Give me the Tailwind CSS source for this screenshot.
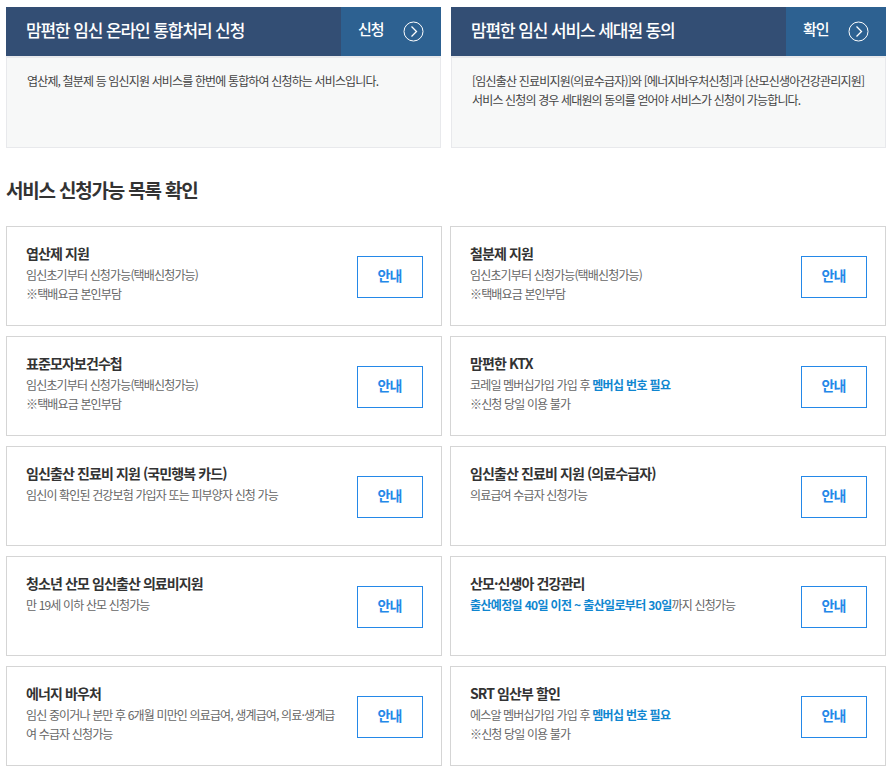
<!DOCTYPE html>
<html lang="ko">
<head>
  <meta charset="UTF-8">
  <title>서비스 신청</title>
  <script src="https://cdn.jsdelivr.net/npm/@tailwindcss/browser@4"></script>
</head>
<body class="bg-white font-['Noto_Sans_CJK_KR',sans-serif] tracking-[-0.85px] text-[#666] overflow-hidden">
  <div class="w-[896px] h-[775px] pt-[7px] pl-[6px] pr-[10px]">
    <!-- Top panels -->
    <div class="flex gap-[10px]">
      <div class="w-[435px]">
        <div class="flex h-[49px] bg-[#334e74] text-white">
          <div class="flex-1 pl-[20px] text-[17px] font-medium leading-[45px] tracking-[-1.1px]">맘편한 임신 온라인 통합처리 신청</div>
          <div class="w-[100px] bg-[#2d6191] flex items-center pl-[17px] pr-[17px] justify-between">
            <span class="text-[15px] font-medium pb-[4px] tracking-[-1px]">신청</span>
            <svg class="w-[21px] h-[21px] mb-[1px]" viewBox="0 0 21 21" fill="none" stroke="white"><circle cx="10.5" cy="10.5" r="9.5"/><path d="M8.5 5.5l5 5-5 5" stroke-width="1.3"/></svg>
          </div>
        </div>
        <div class="h-[92px] bg-[#f7f8f8] border border-t-2 border-[#e8e9ec] pt-[13px] pl-[20px] text-[12px] leading-[19px] text-[#444]">
          엽산제, 철분제 등 임신지원 서비스를 한번에 통합하여 신청하는 서비스입니다.
        </div>
      </div>
      <div class="w-[435px]">
        <div class="flex h-[49px] bg-[#334e74] text-white">
          <div class="flex-1 pl-[20px] text-[17px] font-medium leading-[45px] tracking-[-1.1px]">맘편한 임신 서비스 세대원 동의</div>
          <div class="w-[100px] bg-[#2d6191] flex items-center pl-[17px] pr-[17px] justify-between">
            <span class="text-[15px] font-medium pb-[4px] tracking-[-1px]">확인</span>
            <svg class="w-[21px] h-[21px] mb-[1px]" viewBox="0 0 21 21" fill="none" stroke="white"><circle cx="10.5" cy="10.5" r="9.5"/><path d="M8.5 5.5l5 5-5 5" stroke-width="1.3"/></svg>
          </div>
        </div>
        <div class="h-[92px] bg-[#f7f8f8] border border-t-2 border-[#e8e9ec] pt-[13px] pl-[20px] text-[12px] leading-[19px] text-[#444]">
          <span class="tracking-[-0.8px]">[임신출산 진료비지원(의료수급자)]와 [에너지바우처신청]과 [산모신생아건강관리지원]</span><br>
          서비스 신청의 경우 세대원의 동의를 얻어야 서비스가 신청이 가능합니다.
        </div>
      </div>
    </div>

    <h2 class="mt-[27px] h-[30px] text-[19px] font-bold leading-[30px] tracking-[-1.2px] text-[#333]">서비스 신청가능 목록 확인</h2>

    <!-- Service list -->
    <div class="mt-[21px] grid grid-cols-[436px_436px] gap-x-[8px] gap-y-[10px]">
      <div class="h-[100px] border border-[#d5d5d5] flex items-center justify-between pl-[19px] pr-[18px]">
        <div class="h-[98px] pt-[16px] w-[312px]">
          <h3 class="text-[14px] font-bold leading-[21px] mb-[1px] tracking-[-0.9px] text-[#333]">엽산제 지원</h3>
          <p class="text-[12px] leading-[19px]">임신초기부터 신청가능(택배신청가능)<br>※택배요금 본인부담</p>
        </div>
        <a class="mt-[2px] w-[66px] h-[42px] pb-[4px] pr-[1px] border border-[#2488e8] text-[#2488e8] text-[14px] font-bold flex items-center justify-center">안내</a>
      </div>
      <div class="h-[100px] border border-[#d5d5d5] flex items-center justify-between pl-[19px] pr-[18px]">
        <div class="h-[98px] pt-[16px] w-[312px]">
          <h3 class="text-[14px] font-bold leading-[21px] mb-[1px] tracking-[-0.9px] text-[#333]">철분제 지원</h3>
          <p class="text-[12px] leading-[19px]">임신초기부터 신청가능(택배신청가능)<br>※택배요금 본인부담</p>
        </div>
        <a class="mt-[2px] w-[66px] h-[42px] pb-[4px] pr-[1px] border border-[#2488e8] text-[#2488e8] text-[14px] font-bold flex items-center justify-center">안내</a>
      </div>
      <div class="h-[100px] border border-[#d5d5d5] flex items-center justify-between pl-[19px] pr-[18px]">
        <div class="h-[98px] pt-[16px] w-[312px]">
          <h3 class="text-[14px] font-bold leading-[21px] mb-[1px] tracking-[-0.9px] text-[#333]">표준모자보건수첩</h3>
          <p class="text-[12px] leading-[19px]">임신초기부터 신청가능(택배신청가능)<br>※택배요금 본인부담</p>
        </div>
        <a class="mt-[2px] w-[66px] h-[42px] pb-[4px] pr-[1px] border border-[#2488e8] text-[#2488e8] text-[14px] font-bold flex items-center justify-center">안내</a>
      </div>
      <div class="h-[100px] border border-[#d5d5d5] flex items-center justify-between pl-[19px] pr-[18px]">
        <div class="h-[98px] pt-[16px] w-[312px]">
          <h3 class="text-[14px] font-bold leading-[21px] mb-[1px] tracking-[-0.9px] text-[#333]">맘편한 KTX</h3>
          <p class="text-[12px] leading-[19px]">코레일 멤버십가입 가입 후 <b class="font-bold tracking-[-0.65px] text-[#0f86d0]">멤버십 번호 필요</b><br>※신청 당일 이용 불가</p>
        </div>
        <a class="mt-[2px] w-[66px] h-[42px] pb-[4px] pr-[1px] border border-[#2488e8] text-[#2488e8] text-[14px] font-bold flex items-center justify-center">안내</a>
      </div>
      <div class="h-[100px] border border-[#d5d5d5] flex items-center justify-between pl-[19px] pr-[18px]">
        <div class="h-[98px] pt-[16px] w-[312px]">
          <h3 class="text-[14px] font-bold leading-[21px] mb-[1px] tracking-[-0.9px] text-[#333]">임신출산 진료비 지원 (국민행복 카드)</h3>
          <p class="text-[12px] leading-[19px]">임신이 확인된 건강보험 가입자 또는 피부양자 신청 가능</p>
        </div>
        <a class="mt-[2px] w-[66px] h-[42px] pb-[4px] pr-[1px] border border-[#2488e8] text-[#2488e8] text-[14px] font-bold flex items-center justify-center">안내</a>
      </div>
      <div class="h-[100px] border border-[#d5d5d5] flex items-center justify-between pl-[19px] pr-[18px]">
        <div class="h-[98px] pt-[16px] w-[312px]">
          <h3 class="text-[14px] font-bold leading-[21px] mb-[1px] tracking-[-0.9px] text-[#333]">임신출산 진료비 지원 (의료수급자)</h3>
          <p class="text-[12px] leading-[19px]">의료급여 수급자 신청가능</p>
        </div>
        <a class="mt-[2px] w-[66px] h-[42px] pb-[4px] pr-[1px] border border-[#2488e8] text-[#2488e8] text-[14px] font-bold flex items-center justify-center">안내</a>
      </div>
      <div class="h-[100px] border border-[#d5d5d5] flex items-center justify-between pl-[19px] pr-[18px]">
        <div class="h-[98px] pt-[16px] w-[312px]">
          <h3 class="text-[14px] font-bold leading-[21px] mb-[1px] tracking-[-0.9px] text-[#333]">청소년 산모 임신출산 의료비지원</h3>
          <p class="text-[12px] leading-[19px]">만 19세 이하 산모 신청가능</p>
        </div>
        <a class="mt-[2px] w-[66px] h-[42px] pb-[4px] pr-[1px] border border-[#2488e8] text-[#2488e8] text-[14px] font-bold flex items-center justify-center">안내</a>
      </div>
      <div class="h-[100px] border border-[#d5d5d5] flex items-center justify-between pl-[19px] pr-[18px]">
        <div class="h-[98px] pt-[16px] w-[312px]">
          <h3 class="text-[14px] font-bold leading-[21px] mb-[1px] tracking-[-0.9px] text-[#333]">산모·신생아 건강관리</h3>
          <p class="text-[12px] leading-[19px]"><b class="font-bold tracking-[-0.65px] text-[#0f86d0]">출산예정일 40일 이전 ~ 출산일로부터 30일</b>까지 신청가능</p>
        </div>
        <a class="mt-[2px] w-[66px] h-[42px] pb-[4px] pr-[1px] border border-[#2488e8] text-[#2488e8] text-[14px] font-bold flex items-center justify-center">안내</a>
      </div>
      <div class="h-[100px] border border-[#d5d5d5] flex items-center justify-between pl-[19px] pr-[18px]">
        <div class="h-[98px] pt-[16px] w-[312px]">
          <h3 class="text-[14px] font-bold leading-[21px] mb-[1px] tracking-[-0.9px] text-[#333]">에너지 바우처</h3>
          <p class="text-[12px] leading-[19px] break-all">임신 중이거나 분만 후 6개월 미만인 의료급여, 생계급여, 의료·생계급여 수급자 신청가능</p>
        </div>
        <a class="mt-[2px] w-[66px] h-[42px] pb-[4px] pr-[1px] border border-[#2488e8] text-[#2488e8] text-[14px] font-bold flex items-center justify-center">안내</a>
      </div>
      <div class="h-[100px] border border-[#d5d5d5] flex items-center justify-between pl-[19px] pr-[18px]">
        <div class="h-[98px] pt-[16px] w-[312px]">
          <h3 class="text-[14px] font-bold leading-[21px] mb-[1px] tracking-[-0.9px] text-[#333]">SRT 임산부 할인</h3>
          <p class="text-[12px] leading-[19px]">에스알 멤버십가입 가입 후 <b class="font-bold tracking-[-0.65px] text-[#0f86d0]">멤버십 번호 필요</b><br>※신청 당일 이용 불가</p>
        </div>
        <a class="mt-[2px] w-[66px] h-[42px] pb-[4px] pr-[1px] border border-[#2488e8] text-[#2488e8] text-[14px] font-bold flex items-center justify-center">안내</a>
      </div>
    </div>
  </div>
</body>
</html>
